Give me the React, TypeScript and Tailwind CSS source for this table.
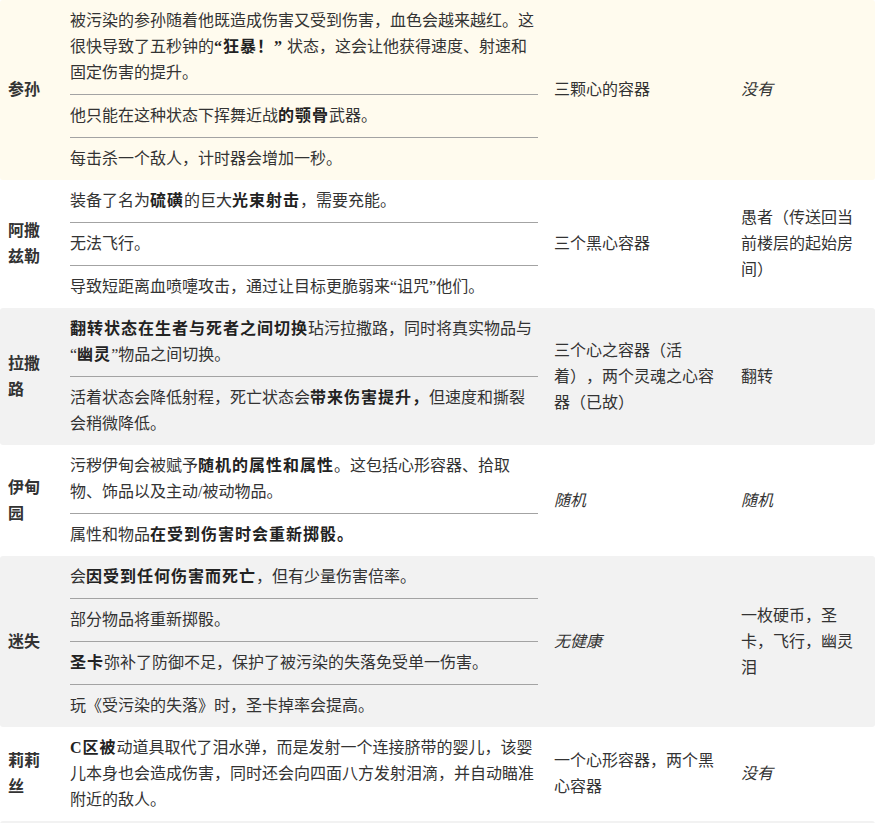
import type { ReactNode } from 'react';

type Row = {
    name: string;
    bg: string;
    paras: ReactNode[];
    health: ReactNode;
    items: ReactNode;
};

function B({ children }: { children: ReactNode }) {
    return <strong className="font-bold tracking-[1px] text-[#222]">{children}</strong>;
}

function I({ children }: { children: ReactNode }) {
    return <em className="italic">{children}</em>;
}

const rows: Row[] = [
    {
        name: '参孙',
        bg: 'bg-[#fffbee]',
        paras: [
            <>
                被污染的参孙随着他既造成伤害又受到伤害，血色会越来越红。这很快导致了五秒钟的<B>“狂暴！”</B> 状态，这会让他获得速度、射速和固定伤害的提升。
            </>,
            <>
                他只能在这种状态下挥舞近战<B>的颚骨</B>武器。
            </>,
            <>每击杀一个敌人，计时器会增加一秒。</>,
        ],
        health: '三颗心的容器',
        items: <I>没有</I>,
    },
    {
        name: '阿撒兹勒',
        bg: 'bg-white',
        paras: [
            <>
                装备了名为<B>硫磺</B>的巨大<B>光束射击</B>，需要充能。
            </>,
            <>无法飞行。</>,
            <>导致短距离血喷嚏攻击，通过让目标更脆弱来“诅咒”他们。</>,
        ],
        health: '三个黑心容器',
        items: '愚者（传送回当前楼层的起始房间）',
    },
    {
        name: '拉撒路',
        bg: 'bg-[#f2f2f2]',
        paras: [
            <>
                <B>翻转状态在生者与死者之间切换</B>玷污拉撒路，同时将真实物品与<wbr />“<B>幽灵</B>”物品之间切换。
            </>,
            <>
                活着状态会降低射程，死亡状态会<B>带来伤害提升，</B>但速度和撕裂会稍微降低。
            </>,
        ],
        health: '三个心之容器（活着），两个灵魂之心容器（已故）',
        items: '翻转',
    },
    {
        name: '伊甸园',
        bg: 'bg-white',
        paras: [
            <>
                污秽伊甸会被赋予<B>随机的属性和属性</B>。这包括心形容器、拾取物、饰品以及主动/被动物品。
            </>,
            <>
                属性和物品<B>在受到伤害时会重新掷骰。</B>
            </>,
        ],
        health: <I>随机</I>,
        items: <I>随机</I>,
    },
    {
        name: '迷失',
        bg: 'bg-[#f2f2f2]',
        paras: [
            <>
                会<B>因受到任何伤害而死亡</B>，但有少量伤害倍率。
            </>,
            <>部分物品将重新掷骰。</>,
            <>
                <B>圣卡</B>弥补了防御不足，保护了被污染的失落免受单一伤害。
            </>,
            <>玩《受污染的失落》时，圣卡掉率会提高。</>,
        ],
        health: <I>无健康</I>,
        items: '一枚硬币，圣卡，飞行，幽灵泪',
    },
    {
        name: '莉莉丝',
        bg: 'bg-white',
        paras: [
            <>
                <B>C区被</B>动道具取代了泪水弹，而是发射一个连接脐带的婴儿，该婴儿本身也会造成伤害，同时还会向四面八方发射泪滴，并自动瞄准附近的敌人。
            </>,
        ],
        health: '一个心形容器，两个黑心容器',
        items: <I>没有</I>,
    },
];

export default function App() {
    return (
        <div className="h-[823px] w-full overflow-hidden bg-white font-['Liberation_Serif','Noto_Sans_CJK_SC',serif] text-base leading-[26px] text-[#333] [text-spacing-trim:space-all]">
            {rows.map((row) => (
                <div
                    key={row.name}
                    className={`grid grid-cols-[62px_484px_187px_1fr] items-center rounded-[3px] ${row.bg}`}
                >
                    {/* Name */}
                    <div className="py-2 pl-2 pr-2 font-bold text-[#333]">{row.name}</div>

                    {/* Description */}
                    <div className="px-2 py-2">
                        {row.paras.map((p, i) => (
                            <div key={i}>
                                {i > 0 && <div className="my-2 h-px bg-[#a3a3a3]" />}
                                <p>{p}</p>
                            </div>
                        ))}
                    </div>

                    {/* Health */}
                    <div className="px-2 py-2">{row.health}</div>

                    {/* Items */}
                    <div className="px-2 py-2">{row.items}</div>
                </div>
            ))}
            <div className="h-10 rounded-[3px] bg-[#f2f2f2]" />
        </div>
    );
}
